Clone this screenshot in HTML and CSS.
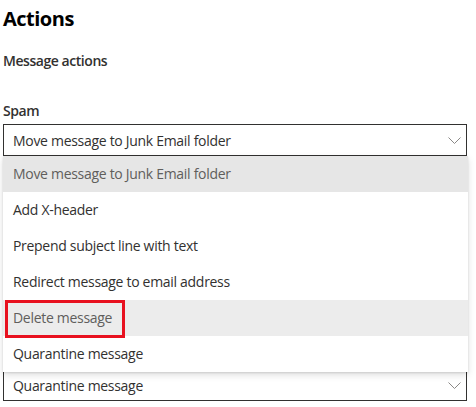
FILE: index.html
```html
<!DOCTYPE html>
<html>
<head>
<meta charset="utf-8">
<link rel="stylesheet" href="styles.css">
</head>
<body>
<div class="panel">
  <h1 class="title">Actions</h1>
  <div class="section">Message actions</div>
  <div class="label">Spam</div>
  <div class="field">
    <div class="select">
      <span class="select-text">Move message to Junk Email folder</span>
      <svg class="chevron" width="13" height="7" viewBox="0 0 13 7"><path d="M0.5 0.5 L6.5 6.5 L12.5 0.5" fill="none" stroke="#8a8886" stroke-width="1"/></svg>
    </div>
    <ul class="menu">
      <li class="option selected">Move message to Junk Email folder</li>
      <li class="option">Add X-header</li>
      <li class="option">Prepend subject line with text</li>
      <li class="option">Redirect message to email address</li>
      <li class="option hovered">Delete message<span class="annot"></span></li>
      <li class="option">Quarantine message</li>
    </ul>
  </div>
  <div class="select second">
    <span class="select-text">Quarantine message</span>
    <svg class="chevron" width="13" height="7" viewBox="0 0 13 7"><path d="M0.5 0.5 L6.5 6.5 L12.5 0.5" fill="none" stroke="#8a8886" stroke-width="1"/></svg>
  </div>
</div>
</body>
</html>
```

FILE: styles.css
```css
html, body {
  margin: 0;
  padding: 0;
  background: #ffffff;
}
body {
  font-family: "Segoe UI", "Open Sans", "Noto Sans", sans-serif;
  color: #323130;
  font-size: 14px;
  letter-spacing: -0.3px;
}
.panel {
  padding: 3px 9px 0 3px;
}
.title {
  margin: 0;
  font-size: 20px;
  font-weight: 700;
  color: #000000;
  line-height: 28px;
  height: 30px;
  padding-top: 2px;
  letter-spacing: -0.5px;
}
.section {
  font-weight: 600;
  line-height: 20px;
  margin-top: 16px;
  letter-spacing: -0.45px;
}
.label {
  font-weight: 600;
  line-height: 20px;
  margin-top: 30px;
  height: 23px;
  letter-spacing: -0.4px;
}
.field {
  position: relative;
}
.select {
  box-sizing: border-box;
  height: 32px;
  border: 1px solid #323130;
  display: flex;
  align-items: center;
  padding: 0 5px 0 9px;
  background: #ffffff;
}
.select.second {
  margin-top: 213px;
}
.select-text {
  flex: 1;
  color: #323130;
}
.menu {
  position: absolute;
  left: 0;
  right: -1px;
  top: 32px;
  margin: 0;
  padding: 0;
  list-style: none;
  background: #ffffff;
  box-shadow: 0 3.2px 7.2px rgba(0,0,0,0.132), 0 0.6px 1.8px rgba(0,0,0,0.108);
  z-index: 2;
}
.option {
  height: 36px;
  line-height: 36px;
  padding-left: 10px;
  color: #323130;
  position: relative;
}
.option.selected {
  background: #e6e6e6;
  color: #605e5c;
}
.option.hovered {
  background: #ececec;
  color: #605e5c;
}
.annot {
  position: absolute;
  left: 2px;
  top: 0;
  width: 120px;
  height: 38px;
  box-sizing: border-box;
  border: 3px solid #e8111f;
}
```
